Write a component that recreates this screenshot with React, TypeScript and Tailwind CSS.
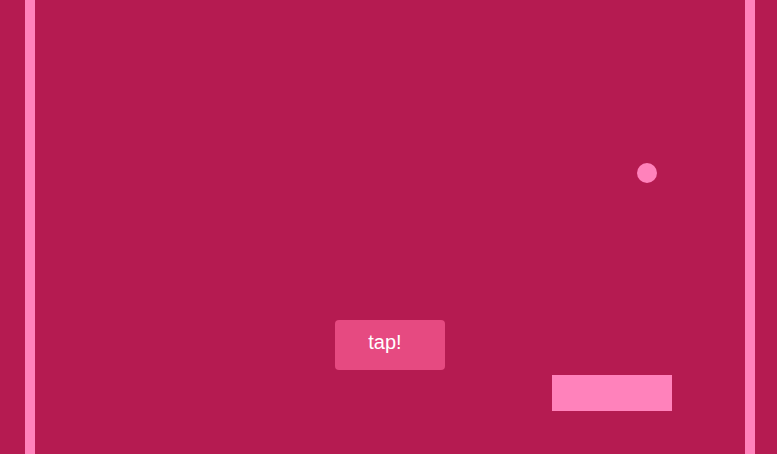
export default function App() {
  return (
    <div className="relative h-[454px] w-[777px] overflow-hidden bg-[#b51b51] font-['Liberation_Sans',Arial,sans-serif]">
      {/* walls */}
      <div className="absolute left-[25px] top-0 h-full w-[10px] bg-[#ff82bb]" />
      <div className="absolute left-[745px] top-0 h-full w-[10px] bg-[#ff82bb]" />

      {/* ball */}
      <div className="absolute left-[637px] top-[163px] h-[20px] w-[20px] rounded-full bg-[#ff82bb]" />

      {/* tap button */}
      <button className="absolute left-[335px] top-[320px] flex h-[50px] w-[110px] items-center justify-center rounded-[4px] bg-[#e64a81] pr-[10px] pb-[6px] text-[20px] text-white">
        tap!
      </button>

      {/* paddle */}
      <div className="absolute left-[552px] top-[375px] h-[36px] w-[120px] bg-[#ff82bb]" />
    </div>
  );
}
